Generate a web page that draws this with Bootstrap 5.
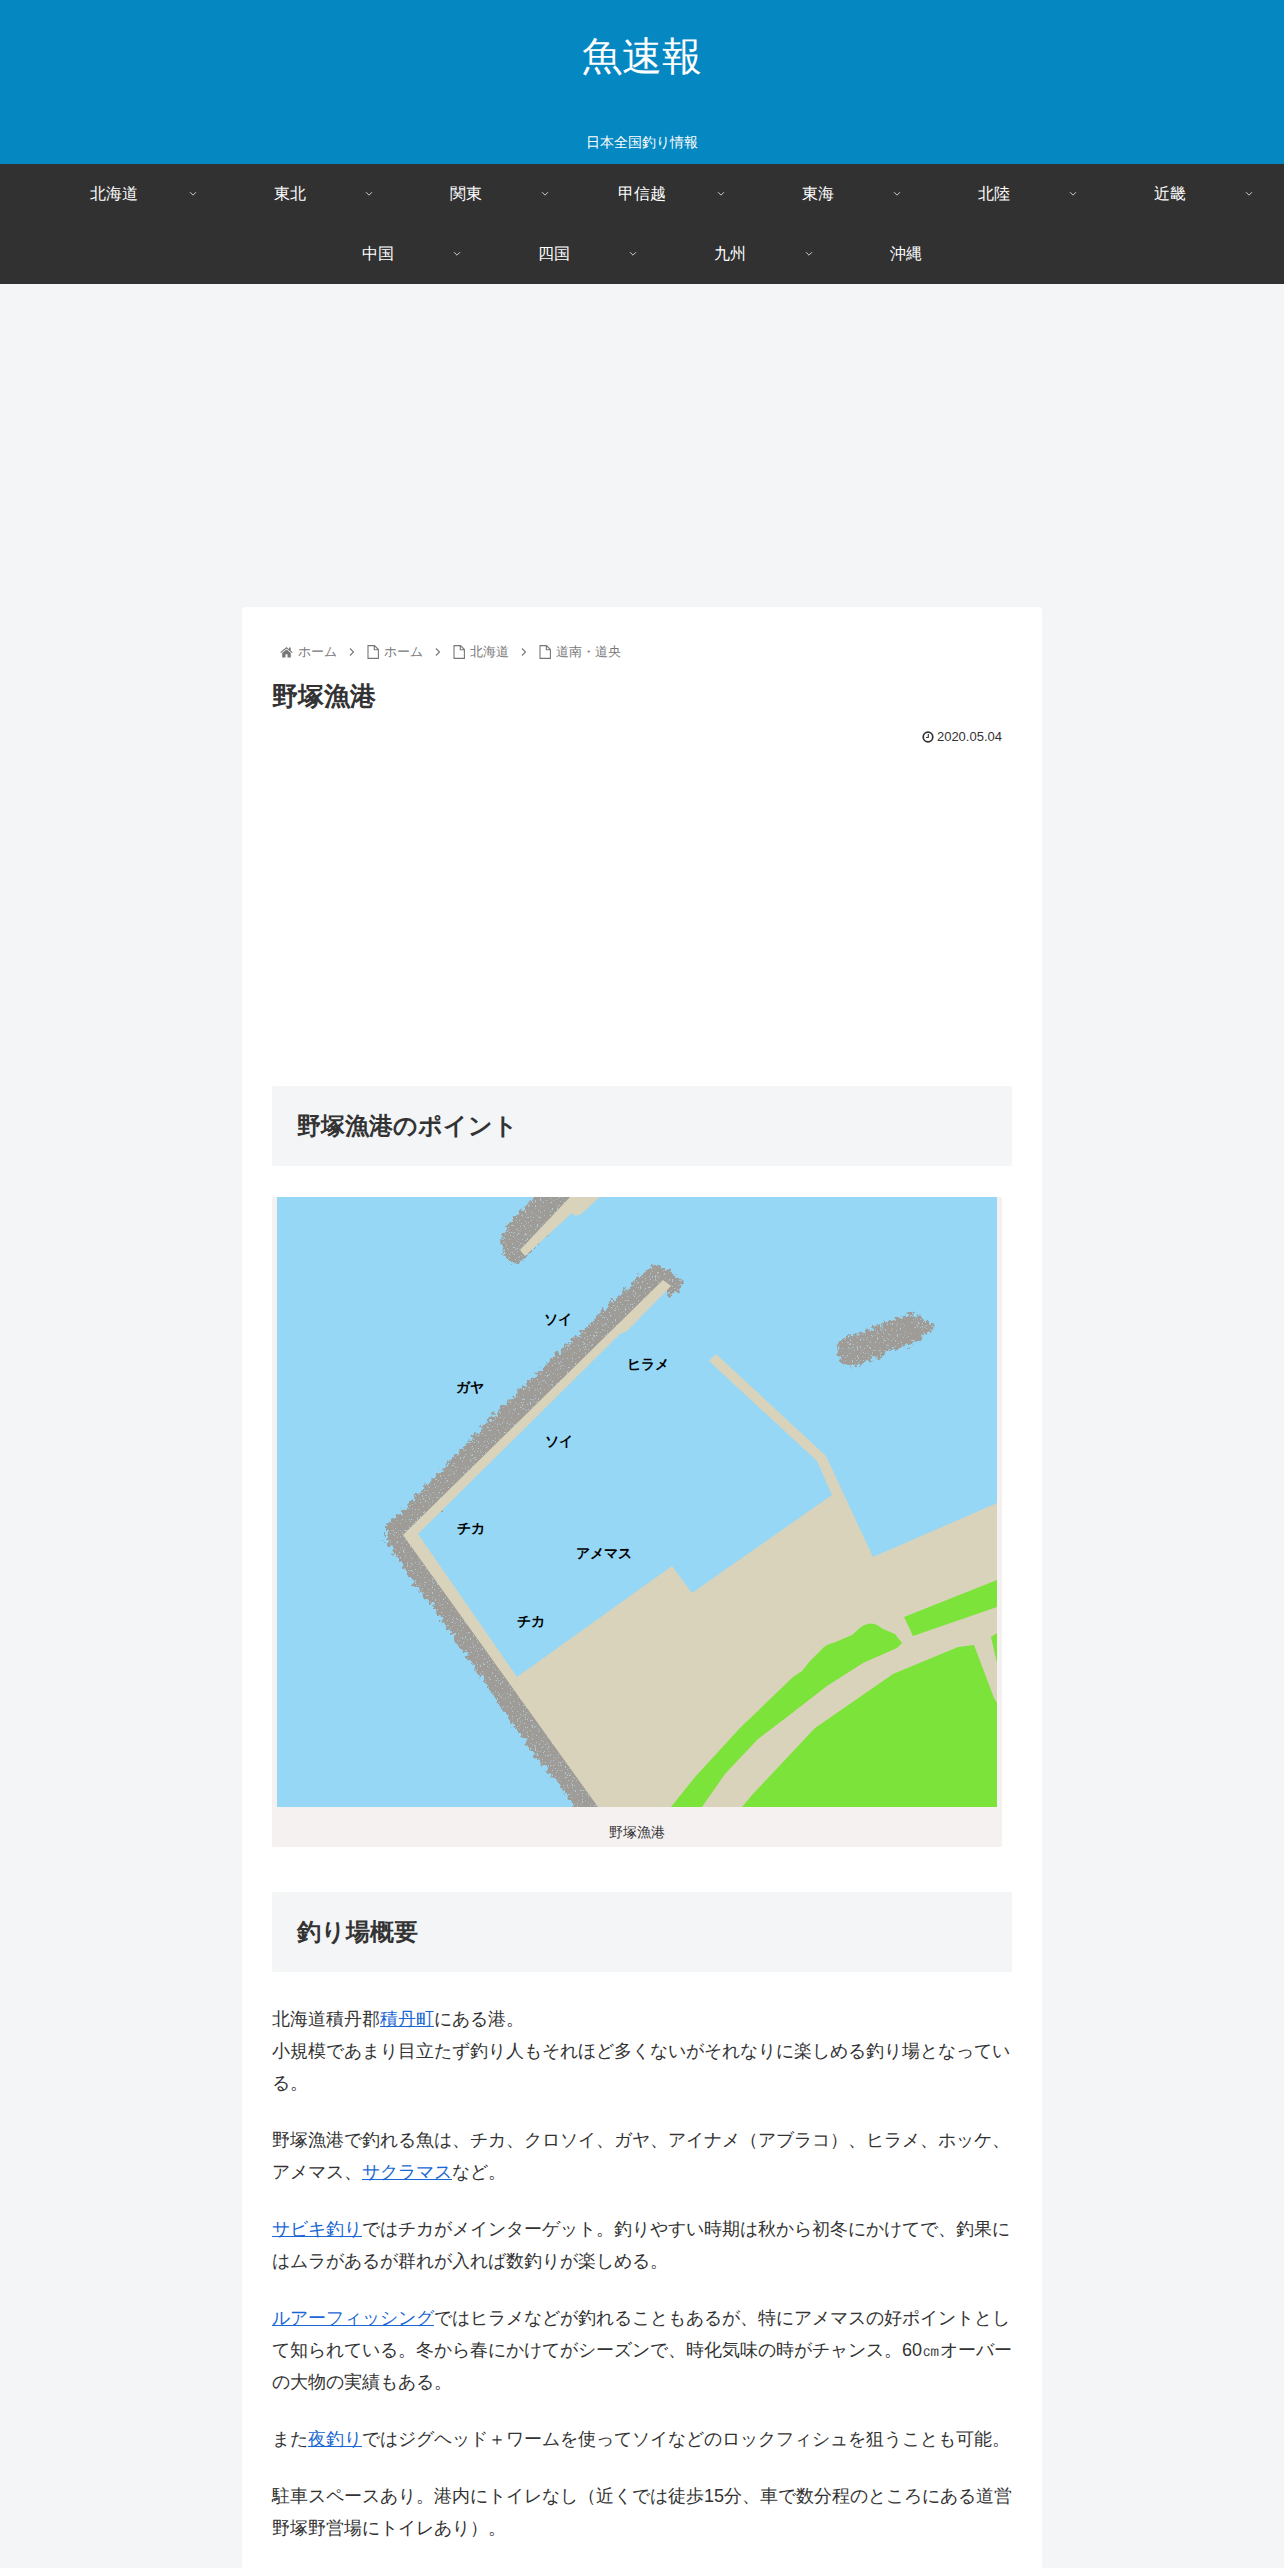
<!DOCTYPE html>
<html lang="ja">
<head>
<meta charset="utf-8">
<meta name="viewport" content="width=device-width, initial-scale=1">
<title>野塚漁港 | 魚速報</title>
<link href="https://cdn.jsdelivr.net/npm/bootstrap@5.3.0/dist/css/bootstrap.min.css" rel="stylesheet">
<style>
body { background: #f4f5f7; color: #333; font-family: "Liberation Sans", sans-serif; font-size: 18px; line-height: 32px; }
.site-head { background: #0588c2; padding: 26px 0 12px; }
.site-name { font-size: 40px; line-height: 60px; }
.tagline { font-size: 14px; line-height: 20px; margin-top: 46px; }
.site-nav { background: #313131; }
.site-nav .nav-item { width: 176px; }
.site-nav .nav-link { line-height: 60px; font-size: 16px; padding: 0; }
.nav-caret { right: 5px; top: 27px; color: #ccc; }
.top-ad { height: 323px; }
.article { max-width: 800px; border-radius: 4px; padding: 30px; }
.crumbs { font-size: 13px; line-height: 20px; padding: 5px 8px; color: #777; gap: 12px; }
.crumbs a { color: inherit; gap: 5px; }
.crumbs svg { flex: none; }
.post-title { font-size: 26px; line-height: 34px; font-weight: 700; margin: 12px 0 14px; }
.post-date { font-size: 13px; line-height: 20px; padding-right: 10px; gap: 3px; }
.mid-ad { height: 339px; }
.section-title { background: #f4f5f7; font-size: 24px; line-height: 30px; font-weight: 700; padding: 25px; border-radius: 2px; margin: 0 0 31px; }
.map-figure { max-width: 730px; background: #f5f1f1; padding: 0 5px; border-radius: 2px; margin: 0 0 45px; }
.map-figure svg { width: 100%; height: auto; }
.map-figure figcaption { font-size: 14px; line-height: 20px; padding: 15px 0 5px; }
.map-label { font-family: "Liberation Sans", sans-serif; font-size: 14px; font-weight: 700; text-anchor: middle; fill: #000; }
.body-text { margin-right: -1px; }
.body-text p { margin-bottom: 25px; }
.body-text a { color: #1967d2; }
</style>
<script src="https://cdn.jsdelivr.net/npm/bootstrap@5.3.0/dist/js/bootstrap.bundle.min.js"></script>
</head>
<body>
<svg class="d-none" aria-hidden="true">
  <symbol id="i-down" viewBox="0 0 8 6"><path d="M1 1.200 4 4.200 7 1.200" fill="none" stroke="currentColor"/></symbol>
  <symbol id="i-right" viewBox="0 0 6 10"><path d="M1 1.500 4.500 5 1 8.500" fill="none" stroke="currentColor" stroke-width="1.100"/></symbol>
  <symbol id="i-home" viewBox="0 0 13 12"><path d="M6.500 1 .3 6.300l.7.8 5.500-4.600L12 7.100l.7-.8-2-1.700V1.500H9v1.700zM6.500 3.400 2.200 7v4q0 .5.5.5h2.800V8.300h2v3.200h2.800q.5 0 .5-.5V7z" fill="currentColor"/></symbol>
  <symbol id="i-file" viewBox="0 0 12 14"><path d="M1 .6h6.500l3.900 3.900v8.900H1zM7.300.6v4.100h4.100" fill="none" stroke="currentColor" stroke-width="1.100"/></symbol>
  <symbol id="i-clock" viewBox="0 0 12 12"><circle cx="6" cy="6" r="4.800" fill="none" stroke="currentColor" stroke-width="1.700"/><path d="M6.300 3v3.500H4" fill="none" stroke="currentColor" stroke-width="1.100"/></symbol>
</svg>

<header class="site-head text-white text-center">
  <div class="site-name"><a class="text-white text-decoration-none" href="#">魚速報</a></div>
  <div class="tagline">日本全国釣り情報</div>
</header>

<nav class="site-nav" aria-label="地域">
  <ul class="nav justify-content-center text-center">
    <li class="nav-item position-relative"><a class="nav-link text-white" href="#">北海道</a><svg class="nav-caret position-absolute" width="8" height="6"><use href="#i-down"/></svg></li>
    <li class="nav-item position-relative"><a class="nav-link text-white" href="#">東北</a><svg class="nav-caret position-absolute" width="8" height="6"><use href="#i-down"/></svg></li>
    <li class="nav-item position-relative"><a class="nav-link text-white" href="#">関東</a><svg class="nav-caret position-absolute" width="8" height="6"><use href="#i-down"/></svg></li>
    <li class="nav-item position-relative"><a class="nav-link text-white" href="#">甲信越</a><svg class="nav-caret position-absolute" width="8" height="6"><use href="#i-down"/></svg></li>
    <li class="nav-item position-relative"><a class="nav-link text-white" href="#">東海</a><svg class="nav-caret position-absolute" width="8" height="6"><use href="#i-down"/></svg></li>
    <li class="nav-item position-relative"><a class="nav-link text-white" href="#">北陸</a><svg class="nav-caret position-absolute" width="8" height="6"><use href="#i-down"/></svg></li>
    <li class="nav-item position-relative"><a class="nav-link text-white" href="#">近畿</a><svg class="nav-caret position-absolute" width="8" height="6"><use href="#i-down"/></svg></li>
    <li class="nav-item position-relative"><a class="nav-link text-white" href="#">中国</a><svg class="nav-caret position-absolute" width="8" height="6"><use href="#i-down"/></svg></li>
    <li class="nav-item position-relative"><a class="nav-link text-white" href="#">四国</a><svg class="nav-caret position-absolute" width="8" height="6"><use href="#i-down"/></svg></li>
    <li class="nav-item position-relative"><a class="nav-link text-white" href="#">九州</a><svg class="nav-caret position-absolute" width="8" height="6"><use href="#i-down"/></svg></li>
    <li class="nav-item"><a class="nav-link text-white" href="#">沖縄</a></li>
  </ul>
</nav>

<div class="top-ad"></div>

<main class="article bg-white mx-auto">
  <nav class="crumbs d-flex flex-wrap align-items-center" aria-label="パンくず">
    <a class="d-flex align-items-center text-decoration-none" href="#"><svg width="13" height="12"><use href="#i-home"/></svg>ホーム</a>
    <svg width="6" height="10"><use href="#i-right"/></svg>
    <a class="d-flex align-items-center text-decoration-none" href="#"><svg width="12" height="14"><use href="#i-file"/></svg>ホーム</a>
    <svg width="6" height="10"><use href="#i-right"/></svg>
    <a class="d-flex align-items-center text-decoration-none" href="#"><svg width="12" height="14"><use href="#i-file"/></svg>北海道</a>
    <svg width="6" height="10"><use href="#i-right"/></svg>
    <a class="d-flex align-items-center text-decoration-none" href="#"><svg width="12" height="14"><use href="#i-file"/></svg>道南・道央</a>
  </nav>
  <h1 class="post-title">野塚漁港</h1>
  <div class="post-date d-flex justify-content-end align-items-center"><svg width="12" height="12"><use href="#i-clock"/></svg><time datetime="2020-05-04">2020.05.04</time></div>

  <div class="mid-ad"></div>

  <h2 class="section-title">野塚漁港のポイント</h2>
  <figure class="map-figure">
    <svg class="d-block" viewBox="0 0 720 610" role="img" aria-label="野塚漁港の釣りポイント図">
      <defs>
        <filter id="rough" x="-5%" y="-5%" width="110%" height="110%" color-interpolation-filters="sRGB">
          <feTurbulence type="fractalNoise" baseFrequency=".22" numOctaves="3" seed="4" result="n"/>
          <feDisplacementMap in="SourceGraphic" in2="n" scale="12" xChannelSelector="R" yChannelSelector="G" result="shape"/>
          <feTurbulence type="fractalNoise" baseFrequency=".6" numOctaves="2" seed="9"/>
          <feColorMatrix type="matrix" values="0 0 0 0 .68  0 0 0 0 .79  0 0 0 0 .84  14 0 0 0 -8.900" result="specks"/>
          <feComposite in="specks" in2="shape" operator="in" result="dots"/>
          <feMerge><feMergeNode in="shape"/><feMergeNode in="dots"/></feMerge>
        </filter>
      </defs>
      <rect width="720" height="610" fill="#95d7f5"/>
      <g fill="#9f9c98" stroke="#9f9c98" stroke-width="2" stroke-linejoin="round" filter="url(#rough)">
        <path d="M266-8 230 31 225 43 229 61 238 67 250 58 305-8z"/>
        <path d="M390 98 401 93 405 85 393 75 380 69 372 71 226 210 120 321 110 329 110 343 136 383 160 413 193 463 226 511 260 560 283 586 304 618 330 618 134 338 388 88z"/>
        <path d="M561 146 563 163 573 168 600 160 616 151 636 146 650 136 656 130 643 120 633 118 600 130 583 137 566 143z"/>
      </g>
      <g fill="#dad3bb">
        <path d="M293 0 243 53 248 59 295 16 298 19 304 17 323 0z"/>
        <path d="M386 83 394 89 355 129 350 134 343 137 141 337 240 480 395 369 415 396 555 298 540 264 432 164 439 157 549 259 596 360 720 306V610H321L126 338z"/>
      </g>
      <g fill="#7ce33a">
        <path d="M394 610 418 580 463 531 516 480 525 474 533 464 546 451Q550 447 556 446L575 438 584 430Q593 424 600 428L606 432 618 437 625 446 620 451 586 466 550 489 510 520 481 542 448 577 425 610z"/>
        <path d="M627 420 720 383V410L636 439z"/>
        <path d="M465 610 475 598 538 531 616 477 681 450 697 448 717 501 720 506V610z"/>
        <path d="M714 440 720 436V466z"/>
      </g>
      <g class="map-label">
        <text x="281" y="127">ソイ</text>
        <text x="371" y="172">ヒラメ</text>
        <text x="193" y="195">ガヤ</text>
        <text x="282" y="249">ソイ</text>
        <text x="194" y="336">チカ</text>
        <text x="327" y="361">アメマス</text>
        <text x="254" y="429">チカ</text>
      </g>
    </svg>
    <figcaption class="text-center">野塚漁港</figcaption>
  </figure>

  <h2 class="section-title">釣り場概要</h2>
  <div class="body-text">
    <p>北海道積丹郡<a href="#">積丹町</a>にある港。<br>小規模であまり目立たず釣り人もそれほど多くないがそれなりに楽しめる釣り場となっている。</p>
    <p>野塚漁港で釣れる魚は、チカ、クロソイ、ガヤ、アイナメ（アブラコ）、ヒラメ、ホッケ、アメマス、<a href="#">サクラマス</a>など。</p>
    <p><a href="#">サビキ釣り</a>ではチカがメインターゲット。釣りやすい時期は秋から初冬にかけてで、釣果にはムラがあるが群れが入れば数釣りが楽しめる。</p>
    <p><a href="#">ルアーフィッシング</a>ではヒラメなどが釣れることもあるが、特にアメマスの好ポイントとして知られている。冬から春にかけてがシーズンで、時化気味の時がチャンス。60㎝オーバーの大物の実績もある。</p>
    <p>また<a href="#">夜釣り</a>ではジグヘッド＋ワームを使ってソイなどのロックフィシュを狙うことも可能。</p>
    <p>駐車スペースあり。港内にトイレなし（近くでは徒歩15分、車で数分程のところにある道営野塚野営場にトイレあり）。</p>
  </div>
</main>
</body>
</html>
